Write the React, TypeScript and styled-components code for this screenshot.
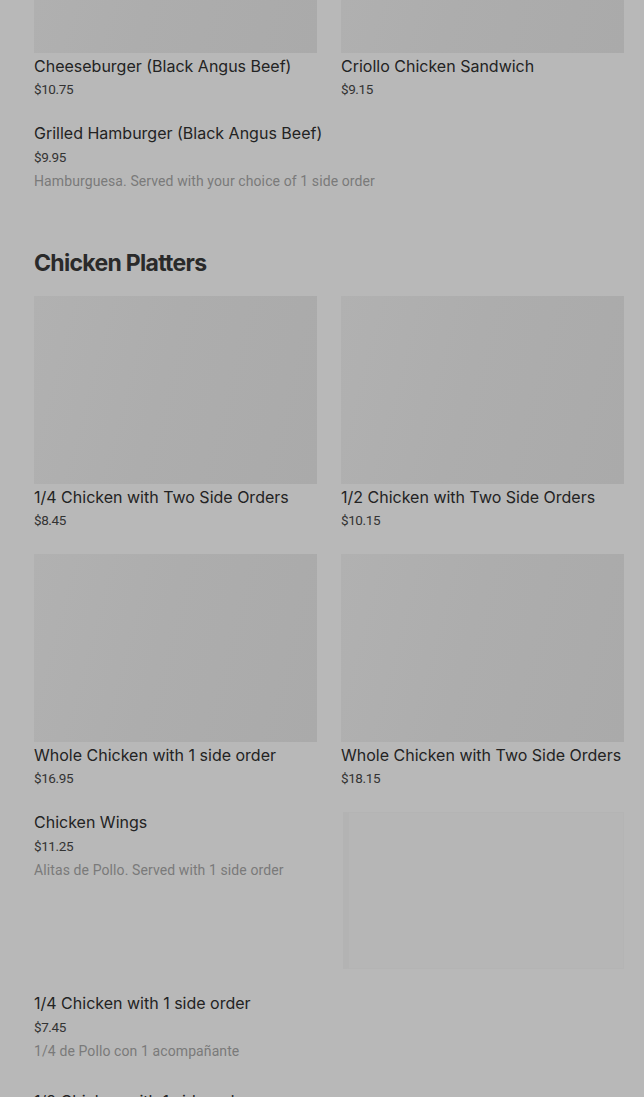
import React from 'react';
import styled, { createGlobalStyle } from 'styled-components';

const GlobalStyle = createGlobalStyle`
  html, body {
    margin: 0;
    padding: 0;
    background: #b8b8b8;
  }
  body {
    font-family: Roboto, 'Liberation Sans', sans-serif;
    color: #2e2e2e;
    overflow: hidden;
  }
`;

const StyledMenu = styled.main`
  padding: 0 20px 0 34px;
  margin-top: -135px;
  height: 1232px;
  overflow: hidden;
`;

const Section = styled.section<{ $first?: boolean }>`
  padding-top: ${(p) => (p.$first ? '0' : '26px')};
`;

const SectionTitle = styled.h2`
  font-family: Inter, 'Noto Sans', sans-serif;
  font-size: 23px;
  font-weight: 700;
  letter-spacing: -0.7px;
  line-height: 32px;
  margin: 0 0 17px;
  color: #2a2a2a;
`;

const Grid = styled.div`
  display: grid;
  grid-template-columns: 1fr 1fr;
  column-gap: 24px;
`;

const Card = styled.div`
  display: flex;
  flex-direction: column;
  padding-bottom: 24px;
`;

const Thumb = styled.div`
  height: 188px;
  background: linear-gradient(105deg, #b1b1b1 0%, #adadad 45%, #aaaaaa 100%);
`;

const Faint = styled.div`
  width: 281px;
  height: 157px;
  flex-shrink: 0;
  box-sizing: border-box;
  background: #b6b6b6;
  border: 1px solid #b4b4b4;
  border-left: 6px solid #b3b3b3;
`;

const Name = styled.div<{ $top?: number }>`
  font-family: Inter, Roboto, sans-serif;
  font-size: 16px;
  font-weight: 400;
  line-height: 20px;
  margin-top: ${(p) => p.$top ?? 3}px;
  color: #232323;
  white-space: nowrap;
`;

const Price = styled.div<{ $top?: number }>`
  font-size: 13.5px;
  line-height: 20px;
  letter-spacing: -0.4px;
  margin-top: ${(p) => p.$top ?? 3}px;
  color: #333333;
`;

const Desc = styled.div`
  font-size: 14px;
  line-height: 20px;
  letter-spacing: 0.1px;
  margin-top: 4px;
  color: #7a7a7a;
`;

const Row = styled.div`
  display: flex;
  justify-content: space-between;
  align-items: flex-start;
  padding-bottom: 24px;
`;

const RowText = styled.div`
  display: flex;
  flex-direction: column;
  min-height: 74px;
`;

type Item = { name: string; price: string; desc?: string; image?: boolean };

const topCards: Item[] = [
  { name: 'Cheeseburger (Black Angus Beef)', price: '$10.75' },
  { name: 'Criollo Chicken Sandwich', price: '$9.15' },
];

const platterCards: Item[] = [
  { name: '1/4 Chicken with Two Side Orders', price: '$8.45' },
  { name: '1/2 Chicken with Two Side Orders', price: '$10.15' },
  { name: 'Whole Chicken with 1 side order', price: '$16.95' },
  { name: 'Whole Chicken with Two Side Orders', price: '$18.15' },
];

const platterRows: Item[] = [
  { name: 'Chicken Wings', price: '$11.25', desc: 'Alitas de Pollo. Served with 1 side order', image: true },
  { name: '1/4 Chicken with 1 side order', price: '$7.45', desc: '1/4 de Pollo con 1 acompañante' },
  { name: '1/2 Chicken with 1 side order', price: '$8.95', desc: '1/2 de Pollo con 1 acompañante' },
];

const MenuRow = ({ item }: { item: Item }) => (
  <Row>
    <RowText>
      <Name $top={0}>{item.name}</Name>
      <Price $top={4}>{item.price}</Price>
      {item.desc && <Desc>{item.desc}</Desc>}
    </RowText>
    {item.image && <Faint />}
  </Row>
);

const App = () => {
  return (
    <>
      <GlobalStyle />
      <StyledMenu>
        <Section $first>
          <Grid>
            {topCards.map((c) => (
              <Card key={c.name}>
                <Thumb />
                <Name>{c.name}</Name>
                <Price>{c.price}</Price>
              </Card>
            ))}
          </Grid>
          <MenuRow
            item={{
              name: 'Grilled Hamburger (Black Angus Beef)',
              price: '$9.95',
              desc: 'Hamburguesa. Served with your choice of 1 side order',
            }}
          />
        </Section>
        <Section>
          <SectionTitle>Chicken Platters</SectionTitle>
          <Grid>
            {platterCards.map((c) => (
              <Card key={c.name}>
                <Thumb />
                <Name>{c.name}</Name>
                <Price>{c.price}</Price>
              </Card>
            ))}
          </Grid>
          {platterRows.map((r) => (
            <MenuRow key={r.name} item={r} />
          ))}
        </Section>
      </StyledMenu>
    </>
  );
};

export default App;
